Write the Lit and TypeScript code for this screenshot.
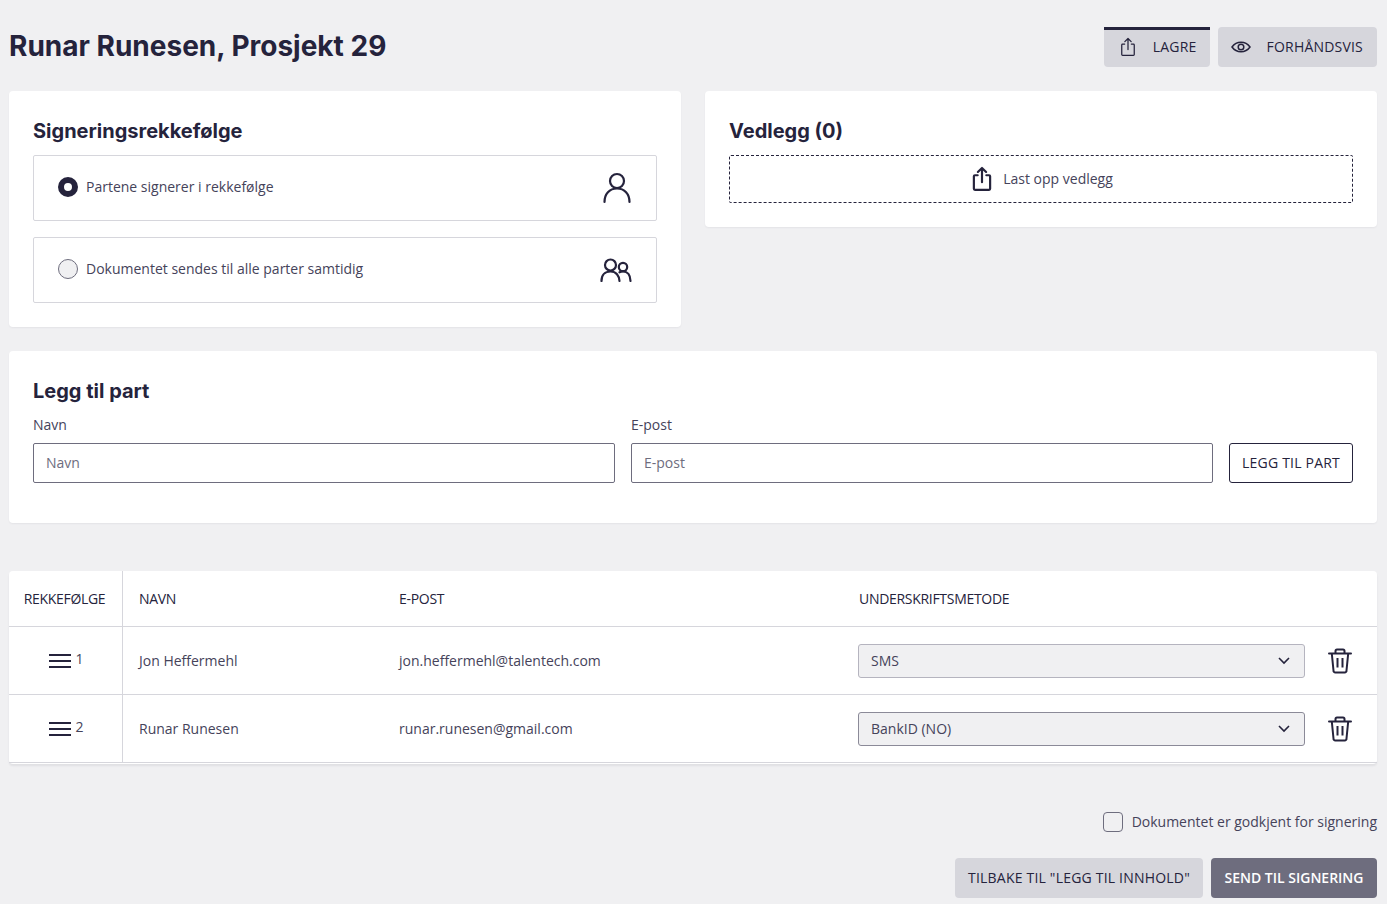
import { LitElement, html, css, svg } from 'lit';
import { customElement } from 'lit/decorators.js';

const uploadIcon = (size: number, w = 1.6) => html`
  <svg width=${size} height=${size} viewBox="0 0 24 24" fill="none" stroke="#25233c" stroke-width=${w} stroke-linecap="round" stroke-linejoin="round">
    <path d="M8 8.5H5.5a1 1 0 0 0-1 1V21a1 1 0 0 0 1 1h13a1 1 0 0 0 1-1V9.500a1 1 0 0 0-1-1H16"/>
    <path d="M12 15V2M8.200 5.500 12 1.800l3.800 3.700"/>
  </svg>`;

const eyeIcon = html`
  <svg width="20" height="20" viewBox="0 0 20 20" fill="none" stroke="#25233c" stroke-width="1.500">
    <path d="M1 10c2.300-3.200 5.300-4.800 9-4.800s6.700 1.600 9 4.800c-2.300 3.200-5.300 4.800-9 4.800S3.300 13.200 1 10z"/>
    <circle cx="10" cy="10" r="2.800"/>
  </svg>`;

const personIcon = html`
  <svg width="30" height="32" viewBox="0 0 30 32" fill="none" stroke="#25233c" stroke-width="2.200" stroke-linecap="round">
    <circle cx="15" cy="9" r="7"/>
    <path d="M2.500 30c0-8 5-13.500 12.500-13.500S27.500 22 27.500 30"/>
  </svg>`;

const peopleIcon = html`
  <svg width="32" height="24" viewBox="0 0 32 24" fill="none" stroke="#25233c" stroke-width="2.200" stroke-linecap="round">
    <circle cx="10.500" cy="7" r="5.500"/>
    <path d="M1.500 23c0-6 3.500-9.500 9-9.500 2.700 0 5 1 6.500 2.800 1.500 1.800 2.300 4 2.500 6.700"/>
    <circle cx="23" cy="9" r="4.200"/>
    <path d="M19.500 14.300c1-.5 2.200-.8 3.500-.8 4.500 0 7.300 3.500 7.500 9.500"/>
  </svg>`;

const dragIcon = html`
  <svg width="22" height="14" viewBox="0 0 22 14" fill="none" stroke="#25233c" stroke-width="2">
    <path d="M0 1h22M0 7h22M0 13h22"/>
  </svg>`;

const trashIcon = html`
  <svg width="24" height="26" viewBox="0 0 24 26" fill="none" stroke="#25233c" stroke-width="2" stroke-linejoin="round">
    <path d="M1 5.500h22" stroke-linecap="round"/>
    <path d="M7.500 5V3a1.500 1.500 0 0 1 1.500-1.500h6A1.500 1.500 0 0 1 16.500 3v2"/>
    <path d="M3.800 5.500 5.500 22.500A1.800 1.800 0 0 0 7.300 24.500h9.400a1.800 1.800 0 0 0 1.800-2L20.200 5.500"/>
    <path d="M9.500 10v9.500M14.500 10v9.500"/>
  </svg>`;

const chevron = svg`<path d="M1 1l5 5 5-5"/>`;

const parties = [
  { order: 1, name: 'Jon Heffermehl', email: 'jon.heffermehl@talentech.com', method: 'SMS', strong: false },
  { order: 2, name: 'Runar Runesen', email: 'runar.runesen@gmail.com', method: 'BankID (NO)', strong: true },
];

@customElement('app-root')
export class AppRoot extends LitElement {
  static styles = css`
    :host {
      display: block;
      min-height: 904px;
      box-sizing: border-box;
      padding: 27px 10px 6px 9px;
      background: #f0f0f2;
      color: #25233c;
      font: 14px/20px 'Open Sans', 'Noto Sans', sans-serif;
    }
    * { box-sizing: border-box; }
    h1, h2 { margin: 0; font-family: Inter, sans-serif; color: #25233c; }
    h1 { font-size: 28px; line-height: 36px; font-weight: 700; }
    h2 { font-size: 20px; line-height: 24px; font-weight: 700; }
    .top { display: flex; justify-content: space-between; align-items: flex-start; height: 64px; }
    .top h1 { margin-top: 1px; }
    .top-actions { display: flex; gap: 8px; }
    .btn {
      height: 40px; padding: 0 13px; display: flex; align-items: center; justify-content: center;
      border: 0; border-radius: 4px; background: #d6d6dc; color: #25233c;
      font: 500 14px/20px 'Open Sans', sans-serif; letter-spacing: 0.2px; white-space: nowrap;
    }
    .btn.tab { gap: 15px; padding: 0 13px 3px 14px; border-top: 3px solid #25233c; border-radius: 0 0 4px 4px; }
    .btn.plain { gap: 16px; padding: 0 14px 0 13px; }
    .btn.dark { background: #6e6d7e; color: #fff; font-weight: 600; letter-spacing: 0; padding: 0 13.500px; }
    .card { background: #fff; border-radius: 4px; box-shadow: 0 1px 2px rgba(37, 35, 60, 0.06); padding: 24px; }
    .cols { display: grid; grid-template-columns: 672px 672px; gap: 24px; align-items: start; }
    .card h2 { margin-bottom: 12px; height: 28px; padding-top: 4px; }
    .option {
      height: 66px; padding: 0 24px; display: flex; align-items: center; justify-content: space-between;
      border: 1px solid #d6d6dc; border-radius: 2px; color: #45435a;
    }
    .option + .option { margin-top: 16px; }
    .option .left { display: flex; align-items: center; gap: 8px; margin-top: -2px; }
    .radio { width: 20px; height: 20px; border-radius: 50%; border: 1px solid #6e6d7e; background: #f0f0f2; }
    .radio.on { border: 6px solid #25233c; background: #fff; }
    .icon-a { display: flex; }
    .drop {
      height: 48px; display: flex; align-items: center; justify-content: center; gap: 8px;
      border: 1px dashed #25233c; border-radius: 2px; color: #45435a;
    }
    .drop svg { margin-top: -1px; }
    .card.add { margin-top: 24px; padding-bottom: 40px; }
    .card.add h2 { margin-bottom: 10px; height: 30px; padding-top: 4px; }
    .add-row { display: grid; grid-template-columns: 582px 582px auto; gap: 16px; align-items: end; }
    .field label { display: block; margin-bottom: 8px; color: #45435a; }
    .input {
      height: 40px; padding: 0 12px; display: flex; align-items: center;
      border: 1px solid #6e6d7e; border-radius: 2px; color: #6e6d7e; background: #fff;
    }
    .outline { height: 40px; border: 1px solid #25233c; background: #fff; padding: 0 12px; border-radius: 3px; }
    .table { margin-top: 48px; background: #fff; border-radius: 4px; box-shadow: 0 2px 2px rgba(37, 35, 60, 0.08); padding-bottom: 1px; }
    .row { display: grid; grid-template-columns: 114px 260px 460px 1fr; height: 68px; border-bottom: 1px solid #d6d6dc; }
    .row.head { height: 56px; font-weight: 500; letter-spacing: -0.3px; }
    .row > div { display: flex; align-items: center; padding-left: 16px; color: #45435a; }
    .row.head > div { color: #25233c; }
    .row > div:first-child { border-right: 1px solid #d6d6dc; }
    .row.head > div:first-child { justify-content: center; padding: 0 2px 0 0; }
    .row > .order { justify-content: center; gap: 4px; padding: 0 0 0 2px; }
    .order span { margin-top: -4px; }
    .row > .method { padding: 0 0 0 16px; margin-left: -1px; gap: 23px; }
    .select {
      width: 447px; height: 34px; padding: 0 14px 0 12px; display: flex; align-items: center; justify-content: space-between;
      border: 1px solid #b5b4bf; border-radius: 3px; background: #f0f0f2; color: #45435a;
    }
    .select.strong { border-color: #8b8a98; }
    .foot { margin-top: 48px; display: flex; flex-direction: column; align-items: flex-end; }
    .check { display: flex; align-items: center; gap: 9px; color: #45435a; }
    .box { width: 20px; height: 20px; border: 1px solid #6e6d7e; border-radius: 4px; background: #f0f0f2; }
    .foot-actions { margin-top: 26px; display: flex; gap: 8px; }
  `;

  render() {
    return html`
      <div class="top">
        <h1>Runar Runesen, Prosjekt 29</h1>
        <div class="top-actions">
          <div class="btn tab">${uploadIcon(20, 1.500)}<span>LAGRE</span></div>
          <div class="btn plain">${eyeIcon}<span>FORHÅNDSVIS</span></div>
        </div>
      </div>

      <div class="cols">
        <section class="card">
          <h2>Signeringsrekkefølge</h2>
          <div class="option">
            <div class="left"><div class="radio on"></div>Partene signerer i rekkefølge</div>
            <div class="icon-a">${personIcon}</div>
          </div>
          <div class="option">
            <div class="left"><div class="radio"></div>Dokumentet sendes til alle parter samtidig</div>
            <div class="icon-a">${peopleIcon}</div>
          </div>
        </section>
        <section class="card">
          <h2>Vedlegg (0)</h2>
          <div class="drop">${uploadIcon(26, 2)}<span>Last opp vedlegg</span></div>
        </section>
      </div>

      <section class="card add">
        <h2>Legg til part</h2>
        <div class="add-row">
          <div class="field"><label>Navn</label><div class="input">Navn</div></div>
          <div class="field"><label>E-post</label><div class="input">E-post</div></div>
          <div class="btn outline">LEGG TIL PART</div>
        </div>
      </section>

      <section class="table">
        <div class="row head">
          <div>REKKEFØLGE</div><div>NAVN</div><div>E-POST</div><div>UNDERSKRIFTSMETODE</div>
        </div>
        ${parties.map(p => html`
          <div class="row">
            <div class="order">${dragIcon}<span>${p.order}</span></div>
            <div>${p.name}</div>
            <div>${p.email}</div>
            <div class="method">
              <div class="select ${p.strong ? 'strong' : ''}">
                ${p.method}
                <svg width="12" height="8" viewBox="0 0 12 8" fill="none" stroke="#25233c" stroke-width="1.600">${chevron}</svg>
              </div>
              ${trashIcon}
            </div>
          </div>`)}
      </section>

      <div class="foot">
        <div class="check"><div class="box"></div>Dokumentet er godkjent for signering</div>
        <div class="foot-actions">
          <div class="btn">TILBAKE TIL "LEGG TIL INNHOLD"</div>
          <div class="btn dark">SEND TIL SIGNERING</div>
        </div>
      </div>
    `;
  }
}
